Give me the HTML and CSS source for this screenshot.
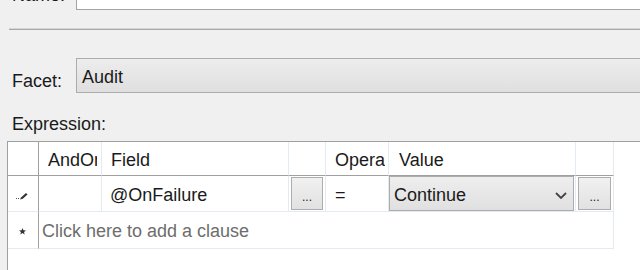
FILE: index.html
```html
<!DOCTYPE html>
<html lang="en">
<head>
<meta charset="UTF-8">
<meta name="viewport" content="width=device-width, initial-scale=1.0">
<title>Condition</title>
<link rel="stylesheet" href="styles.css">
</head>
<body>

<div class="form">
    <div class="field-row name-row">
        <label class="field-label">Name:</label>
        <div class="textbox"></div>
    </div>
    <div class="separator"></div>
    <div class="field-row facet-row">
        <label class="field-label">Facet:</label>
        <div class="combo">Audit</div>
    </div>
    <div class="section-label">Expression:</div>

    <div class="grid">
        <div class="grid-row header-row">
            <div class="cell row-head"></div>
            <div class="cell col-andor"><span class="head-text">AndOr</span></div>
            <div class="cell"><span class="head-text">Field</span></div>
            <div class="cell"></div>
            <div class="cell col-op"><span class="head-text">Operator</span></div>
            <div class="cell col-value"><span class="head-text">Value</span></div>
            <div class="cell"></div>
        </div>
        <div class="grid-row data-row">
            <div class="cell row-head">
                <svg width="14" height="8" viewBox="0 0 14 8">
                    <rect x="1" y="6" width="1" height="1" fill="#555"/>
                    <rect x="3" y="6" width="1" height="1" fill="#555"/>
                    <path d="M5 7.5 L6 5.5 L11 1 L12.5 2.5 L7.8 6.8 Z" fill="#333"/>
                </svg>
            </div>
            <div class="cell"></div>
            <div class="cell">@OnFailure</div>
            <div class="cell btn-cell"><div class="dots-btn">...</div></div>
            <div class="cell col-op">=</div>
            <div class="cell value-cell">
                <div class="value-combo">
                    <span>Continue</span>
                    <svg width="12" height="7" viewBox="0 0 12 7">
                        <polyline points="1,1 6,6 11,1" fill="none" stroke="#444" stroke-width="1.8"/>
                    </svg>
                </div>
            </div>
            <div class="cell btn-cell"><div class="dots-btn wide">...</div></div>
        </div>
        <div class="grid-row new-row">
            <div class="cell row-head">
                <svg width="7" height="7" viewBox="0 0 7 7">
                    <polygon points="3.5,0 4.4,2.3 7,2.4 5,4 5.7,6.6 3.5,5.1 1.3,6.6 2,4 0,2.4 2.6,2.3" fill="#333"/>
                </svg>
            </div>
            <div class="cell new-hint">Click here to add a clause</div>
        </div>
    </div>
</div>

</body>
</html>
```

FILE: styles.css
```css
body {
    margin: 0;
    height: 270px;
    overflow: hidden;
    background-color: #f0f0f0;
    font-family: "Liberation Sans", Arial, sans-serif;
    font-size: 18px;
    color: #1a1a1a;
}

.field-row {
    display: flex;
    align-items: flex-end;
    height: 35px;
    padding-left: 12px;
}

.name-row {
    margin-top: -25px;
}

.name-row .field-label {
    padding-bottom: 5px;
}

.facet-row {
    margin-top: 28px;
}

.field-label {
    flex: none;
    width: 64px;
    line-height: 20px;
    padding-bottom: 2px;
}

.textbox {
    flex: 1;
    height: 35px;
    box-sizing: border-box;
    background-color: #fff;
    border: 1px solid #a3a3a3;
    border-right: none;
}

.separator {
    margin: 18px 0 0 9px;
    border-top: 1px solid #d6d6d6;
    border-bottom: 1px solid #a8a8a8;
}

.combo {
    flex: 1;
    height: 35px;
    box-sizing: border-box;
    padding: 8px 0 0 5px;
    line-height: 20px;
    border: 1px solid #acacac;
    border-right: none;
    background: linear-gradient(#ededed, #dfdfdf);
}

.section-label {
    margin-top: 21px;
    padding-left: 12px;
    line-height: 20px;
}

/* expression grid */
.grid {
    margin: 7px 0 0 7px;
    height: 128px;
    background-color: #fff;
    border-top: 1px solid #a0a0a0;
    border-left: 1px solid #a0a0a0;
}

.grid-row {
    display: grid;
    grid-template-columns: 31px 63px 187px 37px 63px 187px 38px;
}

.cell {
    box-sizing: border-box;
    border-right: 1px solid #e4eaf2;
    border-bottom: 1px solid #e4eaf2;
    line-height: 20px;
    white-space: nowrap;
    overflow: hidden;
}

.head-text {
    display: block;
    overflow: hidden;
}

.header-row .cell {
    height: 34px;
    padding: 8px 2px 0 9px;
    border-bottom-color: #a0a0a0;
}

.header-row .col-andor {
    padding-right: 4px;
}

.header-row .col-op {
    padding-right: 3px;
}

.header-row .col-value {
    padding-left: 10px;
}

.data-row .cell {
    height: 36px;
    padding: 9px 0 0 8px;
}

.data-row .col-op {
    padding-left: 9px;
}

.new-row .cell {
    height: 37px;
    padding: 9px 0 0 8px;
}

.grid-row .row-head {
    display: flex;
    align-items: center;
    justify-content: center;
    padding: 0;
    border-right-color: #a0a0a0;
}

.data-row .row-head svg {
    margin: 4px 2px 0 0;
}

.new-row .row-head svg {
    margin: 2px 2px 0 0;
}

.data-row .btn-cell {
    padding: 1px 0 0 2px;
}

.dots-btn {
    width: 32px;
    height: 33px;
    box-sizing: border-box;
    padding-top: 9px;
    font-size: 12px;
    text-align: center;
    border: 1px solid #adadad;
    background: linear-gradient(#f1f1f1, #e1e1e1);
}

.dots-btn.wide {
    width: 33px;
}

.data-row .value-cell {
    padding: 0;
}

.value-combo {
    display: flex;
    justify-content: space-between;
    align-items: flex-start;
    width: 185px;
    height: 35px;
    box-sizing: border-box;
    padding: 8px 6px 0 4px;
    border: 1px solid #acacac;
    background: linear-gradient(#eeeeee, #e0e0e0);
}

.value-combo svg {
    margin-top: 7px;
}

.new-row .new-hint {
    grid-column: 2 / -1;
    padding-left: 3px;
    color: #6d6d6d;
}
```
